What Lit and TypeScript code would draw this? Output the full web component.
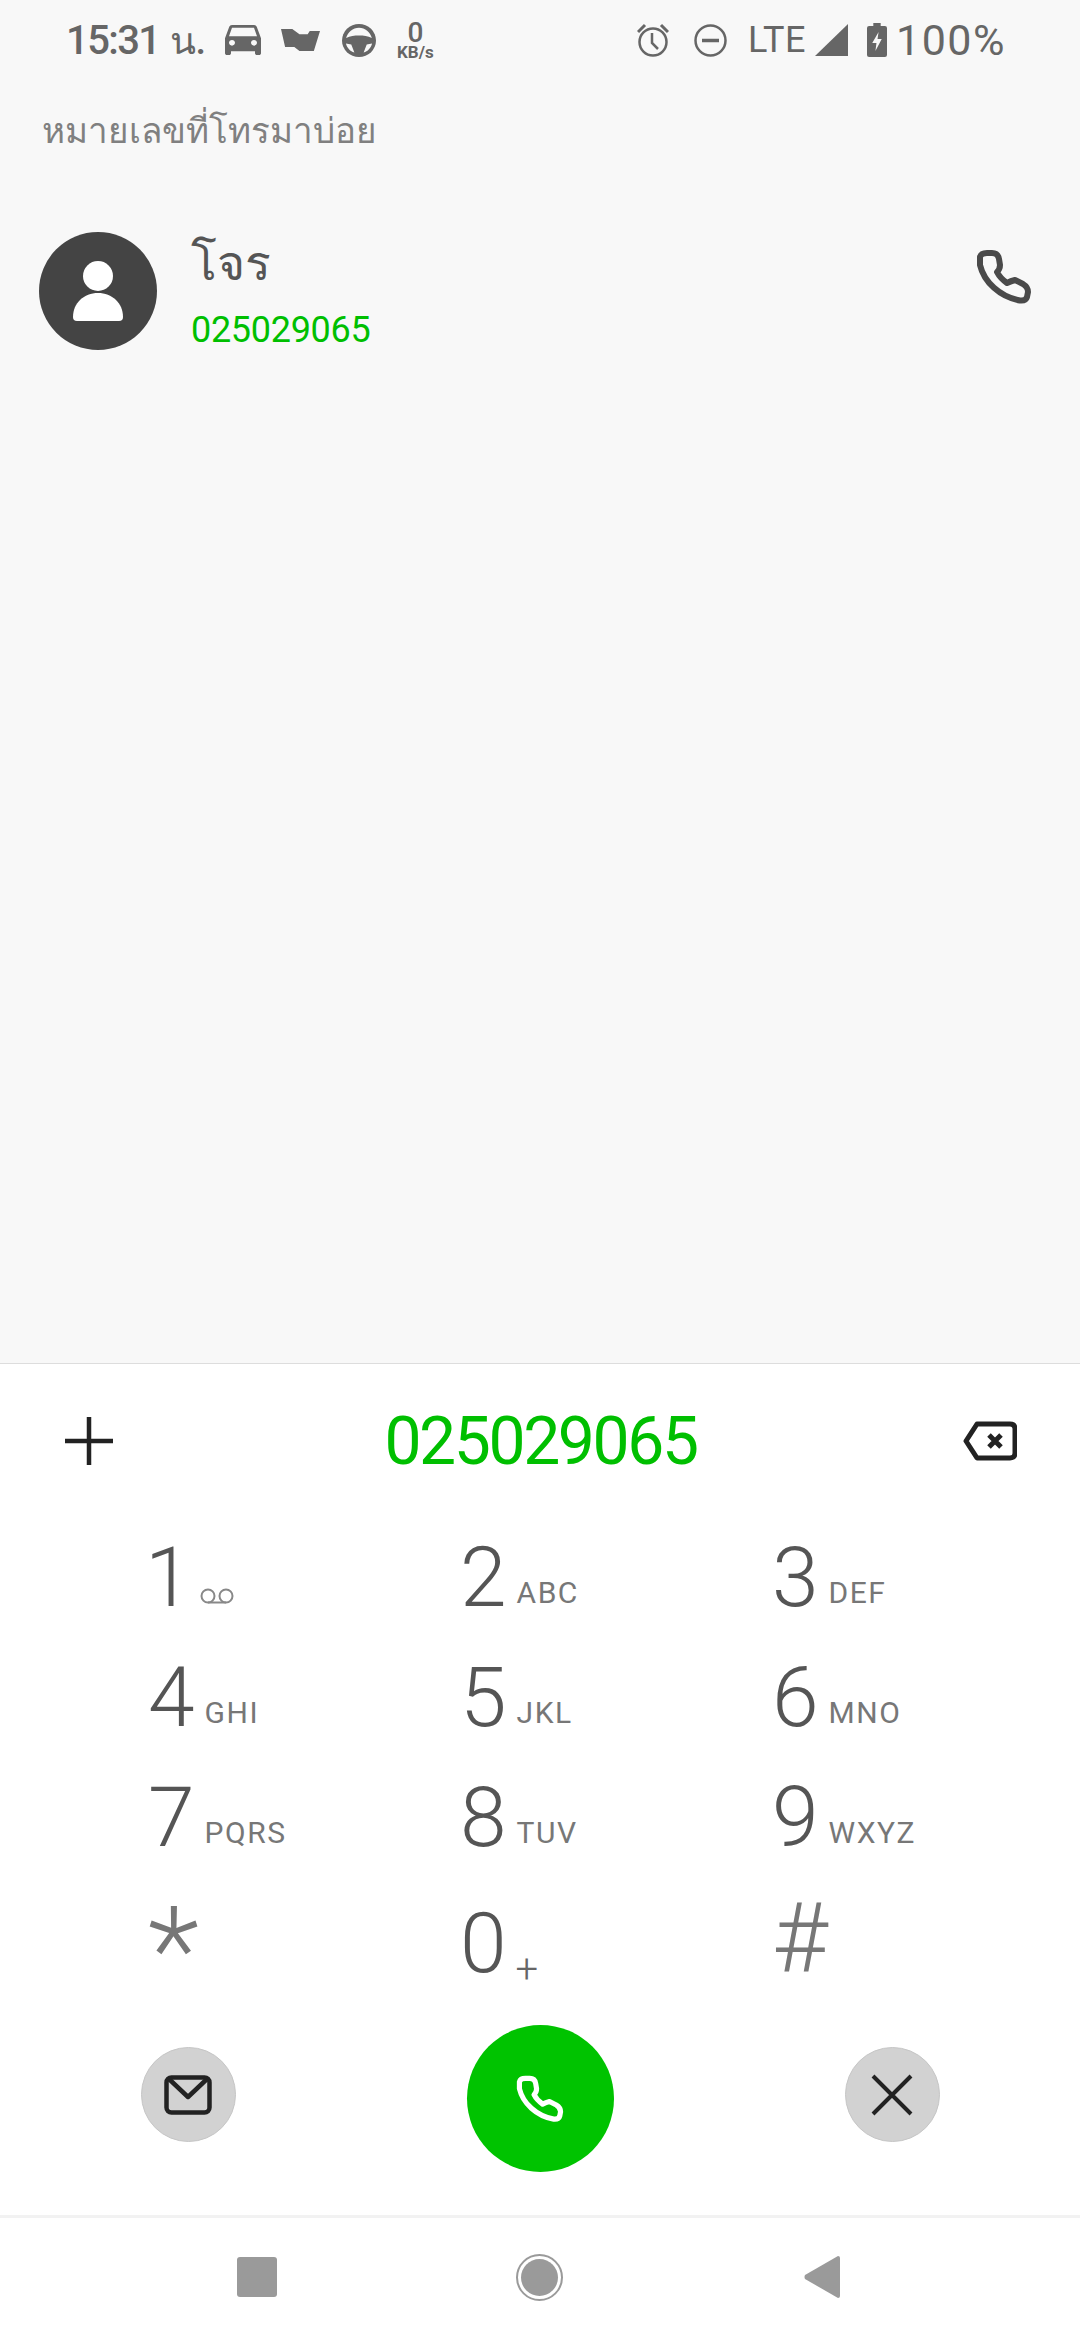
import { LitElement, html, css } from "lit";
import { customElement } from "lit/decorators.js";

const phonePath = "M20 22 Q21 18 27 18 L32 18 Q38 18 39 24 L40 30 Q40 34 37 37 Q40 43 47 48 Q51 46 55 45 L63 49 Q68 52 68 57 L67 62 Q66 66 60 65.5 C40 62 24 47 20 30 Z";

const keys = [
  { d: "1", l: "" }, { d: "2", l: "ABC" }, { d: "3", l: "DEF" },
  { d: "4", l: "GHI" }, { d: "5", l: "JKL" }, { d: "6", l: "MNO" },
  { d: "7", l: "PQRS" }, { d: "8", l: "TUV" }, { d: "9", l: "WXYZ" },
];

@customElement("app-root")
export class AppRoot extends LitElement {
  static styles = css`
    :host {
      display: flex;
      flex-direction: column;
      width: 1080px;
      height: 2340px;
      background: #f8f8f8;
      font-family: Roboto, "Noto Sans", sans-serif;
      overflow: hidden;
    }
    svg { display: block; flex: none; }

    /* barra de estado */
    .status {
      display: flex;
      align-items: center;
      justify-content: space-between;
      height: 80px;
      padding: 0 74px 0 66px;
      color: #666;
    }
    .status-group { display: flex; align-items: center; }
    .time { font-size: 40px; font-weight: 500; letter-spacing: -1.6px; }
    .suffix { font-size: 38px; font-weight: 500; margin-left: 10px; }
    .car { margin-left: 19px; }
    .tray { margin-left: 20px; }
    .wheel { margin-left: 22px; }
    .speed {
      display: flex;
      flex-direction: column;
      align-items: center;
      margin-left: 21px;
    }
    .speed b { font-size: 28px; font-weight: 500; line-height: 25px; margin-top: -2px; }
    .speed span { font-size: 17px; font-weight: 700; line-height: 14px; }
    .dnd { margin-left: 25px; }
    .lte { font-size: 36px; margin-left: 21px; letter-spacing: 0.5px; }
    .signal { margin-left: 9px; }
    .battery { margin-left: 19px; }
    .level { font-size: 43px; margin-left: 9px; letter-spacing: 1.5px; }

    /* recientes */
    .recent { flex: 1; }
    .heading {
      margin: 27px 0 0 42px;
      font-size: 35px;
      line-height: 50px;
      color: #808080;
    }
    .contact {
      display: flex;
      align-items: flex-start;
      margin-top: 75px;
      padding: 0 48px 0 39px;
    }
    .avatar {
      display: flex;
      align-items: center;
      justify-content: center;
      width: 118px;
      height: 118px;
      border-radius: 50%;
      background: #444;
    }
    .info { flex: 1; margin-left: 34px; }
    .name { font-size: 48px; line-height: 60px; padding-top: 2px; color: #555; }
    .num { font-size: 36px; line-height: 44px; margin-top: 14px; color: #00bf00; letter-spacing: -0.3px; }
    .contact-call { margin-top: 17px; }

    /* teclado */
    .panel {
      background: #fff;
      border-top: 1px solid #ddd;
    }
    .dial {
      display: flex;
      align-items: center;
      height: 154px;
      padding: 0 63px 0 65px;
    }
    .number {
      flex: 1;
      padding-left: 5px;
      text-align: center;
      font-size: 66px;
      letter-spacing: -2.4px;
      color: #00bf00;
    }
    .keypad {
      display: grid;
      grid-template-columns: repeat(3, 312px);
      grid-template-rows: 120px 120px 120px 126px;
      padding-left: 148px;
    }
    .key { display: flex; align-items: baseline; }
    .first { margin-left: -3px; }
    .digit { font-size: 84px; line-height: 120px; font-weight: 300; color: #555; }
    .letters {
      align-self: flex-end;
      margin: 0 0 30px 10px;
      font-size: 30px;
      line-height: 30px;
      letter-spacing: 1.5px;
      color: #777;
    }
    .plus {
      align-self: flex-end;
      margin: 0 0 14px 9px;
      font-size: 40px;
      line-height: 40px;
      font-weight: 300;
      color: #666;
    }
    .vm { align-self: flex-end; margin: 0 0 34px 8px; }
    .low { padding-top: 6px; }
    .symbol { font-weight: 300; color: #777; }
    .star { font-size: 120px; line-height: 134px; }
    .hash { font-size: 96px; line-height: 108px; }
    .actions {
      display: grid;
      grid-template-columns: repeat(3, 352px);
      justify-items: center;
      align-items: start;
      padding: 21px 12px 43px;
    }
    .round {
      display: flex;
      align-items: center;
      justify-content: center;
      border-radius: 50%;
      box-sizing: border-box;
    }
    .grey {
      width: 95px;
      height: 95px;
      margin-top: 22px;
      background: #d2d2d2;
      border: 1px solid #c6c6c6;
    }
    .green { width: 147px; height: 147px; background: #00c300; }
    .nav {
      display: flex;
      align-items: center;
      height: 118px;
      padding: 0 0 4px 237px;
      border-top: 3px solid #f2f2f2;
    }
    .square { width: 40px; height: 40px; border-radius: 3px; background: #9a9a9a; }
    .home { margin-left: 239px; }
    .back { margin-left: 241px; }
  `;

  private phone(size: number, color: string, stroke: number) {
    return html`<svg width=${size} height=${size} viewBox="16 14 56 56" fill="none">
      <path d=${phonePath} stroke=${color} stroke-width=${stroke} stroke-linejoin="round"></path>
    </svg>`;
  }

  private statusBar() {
    return html`<div class="status">
      <div class="status-group">
        <span class="time">15:31</span>
        <span class="suffix">น.</span>
        <svg class="car" width="36" height="30" viewBox="3 5 18 16" preserveAspectRatio="none" fill="#666">
          <path d="M18.92 6.01C18.72 5.42 18.16 5 17.5 5h-11c-.66 0-1.21.42-1.42 1.01L3 12v8c0 .55.45 1 1 1h1c.55 0 1-.45 1-1v-1h12v1c0 .55.45 1 1 1h1c.55 0 1-.45 1-1v-8l-2.08-5.99zM6.5 16c-.83 0-1.5-.67-1.5-1.5S5.67 13 6.5 13s1.5.67 1.5 1.5S7.33 16 6.5 16zm11 0c-.83 0-1.5-.67-1.5-1.5s.67-1.5 1.5-1.5 1.5.67 1.5 1.5-.67 1.5-1.5 1.5zM5 11l1.5-4.5h11L19 11H5z"></path>
        </svg>
        <svg class="tray" width="39" height="23" viewBox="0 0 38 23" preserveAspectRatio="none" fill="#666">
          <path d="M0 0H11L18 5.3H26L28 2H38L32 22H18L13 18H4Z"></path>
        </svg>
        <svg class="wheel" width="34" height="33" viewBox="0 0 33 33" preserveAspectRatio="none">
          <circle cx="16.5" cy="16.5" r="16.5" fill="#666"></circle>
          <path d="M4 14C5.5 8 10.5 3.7 16.5 3.7S27.5 8 29 14C25 12 21 11.5 16.5 11.5S8 12 4 14Z" fill="#f8f8f8"></path>
          <path d="M3.8 19.5L9 20.5L12 28.6C8 27.5 5 24 3.8 19.5ZM29.2 19.5L24 20.5L21 28.6C25 27.5 28 24 29.2 19.5Z" fill="#f8f8f8"></path>
        </svg>
        <div class="speed"><b>0</b><span>KB/s</span></div>
      </div>
      <div class="status-group">
        <svg width="32" height="34" viewBox="0 0 32 34" fill="none" stroke="#666">
          <circle cx="16" cy="19" r="13.5" stroke-width="2.5"></circle>
          <path d="M15 10V20L21 26" stroke-width="2.5"></path>
          <path d="M1 9L8 2M31 9L24 2" stroke-width="3"></path>
        </svg>
        <svg class="dnd" width="33" height="33" viewBox="0 0 33 33" fill="none" stroke="#666">
          <circle cx="16.5" cy="16.5" r="15" stroke-width="2.5"></circle>
          <path d="M8 16.5H25" stroke-width="3.5"></path>
        </svg>
        <span class="lte">LTE</span>
        <svg class="signal" width="33" height="32" viewBox="0 0 33 32" fill="#666"><path d="M33 0V32H0Z"></path></svg>
        <svg class="battery" width="20" height="34" viewBox="0 0 19 34" preserveAspectRatio="none">
          <path d="M6 0H13V3H17Q19 3 19 5V32Q19 34 17 34H2Q0 34 0 32V5Q0 3 2 3H6Z" fill="#666"></path>
          <path d="M11 9L5 20H9L8 28L14 16H10Z" fill="#f8f8f8"></path>
        </svg>
        <span class="level">100%</span>
      </div>
    </div>`;
  }

  private keyFor(k: { d: string; l: string }) {
    return html`<div class="key ${k.d === "1" ? "first" : ""}">
      <span class="digit">${k.d}</span>
      ${k.d === "1"
        ? html`<svg class="vm" width="34" height="16" viewBox="0 0 34 16" fill="none" stroke="#888" stroke-width="2">
            <circle cx="8" cy="8" r="6.5"></circle>
            <circle cx="26" cy="8" r="6.5"></circle>
            <path d="M8 14.5H26"></path>
          </svg>`
        : html`<span class="letters">${k.l}</span>`}
    </div>`;
  }

  render() {
    return html`
      ${this.statusBar()}
      <div class="recent">
        <div class="heading">หมายเลขที่โทรมาบ่อย</div>
        <div class="contact">
          <div class="avatar">
            <svg width="52" height="60" viewBox="0 0 52 60" fill="#fff">
              <ellipse cx="26" cy="15" rx="15" ry="15"></ellipse>
              <path d="M1 56C1 42 12 32 26 32S51 42 51 56Q51 60 47 60H5Q1 60 1 56Z"></path>
            </svg>
          </div>
          <div class="info">
            <div class="name">โจร</div>
            <div class="num">025029065</div>
          </div>
          <div class="contact-call">${this.phone(56, "#4a4a4a", 6)}</div>
        </div>
      </div>
      <div class="panel">
        <div class="dial">
          <svg width="48" height="48" viewBox="0 0 48 48" stroke="#222" stroke-width="4.5">
            <path d="M24 0V48M0 24H48"></path>
          </svg>
          <div class="number">025029065</div>
          <svg width="54" height="40" viewBox="0 0 54 40" fill="none" stroke="#222">
            <path d="M14 3H47Q52 3 52 8V32Q52 37 47 37H14L3 20Z" stroke-width="5" stroke-linejoin="round"></path>
            <path d="M26 14L38 26M38 14L26 26" stroke-width="5"></path>
          </svg>
        </div>
        <div class="keypad">
          ${keys.map((k) => this.keyFor(k))}
          <div class="key low"><span class="symbol star">*</span></div>
          <div class="key low"><span class="digit">0</span><span class="plus">+</span></div>
          <div class="key low"><span class="symbol hash">#</span></div>
        </div>
        <div class="actions">
          <div class="round grey">
            <svg width="48" height="40" viewBox="0 0 48 40" fill="none" stroke="#222" stroke-width="4.5" stroke-linejoin="round">
              <rect x="2.5" y="2.5" width="43" height="35" rx="5"></rect>
              <path d="M5 4L24 22L43 4"></path>
            </svg>
          </div>
          <div class="round green">${this.phone(48, "#fff", 6)}</div>
          <div class="round grey">
            <svg width="42" height="42" viewBox="0 0 42 42" stroke="#222" stroke-width="4">
              <path d="M2 2L40 40M40 2L2 40"></path>
            </svg>
          </div>
        </div>
        <div class="nav">
          <div class="square"></div>
          <svg class="home" width="47" height="47" viewBox="0 0 47 47">
            <circle cx="23.5" cy="23.5" r="22.5" fill="none" stroke="#9a9a9a" stroke-width="2"></circle>
            <circle cx="23.5" cy="23.5" r="18.5" fill="#9a9a9a"></circle>
          </svg>
          <svg class="back" width="36" height="42" viewBox="0 0 36 42" fill="#9a9a9a">
            <path d="M34 0Q36 0 36 2V40Q36 42 34 42L1 23Q0 21 1 19Z"></path>
          </svg>
        </div>
      </div>
    `;
  }
}
